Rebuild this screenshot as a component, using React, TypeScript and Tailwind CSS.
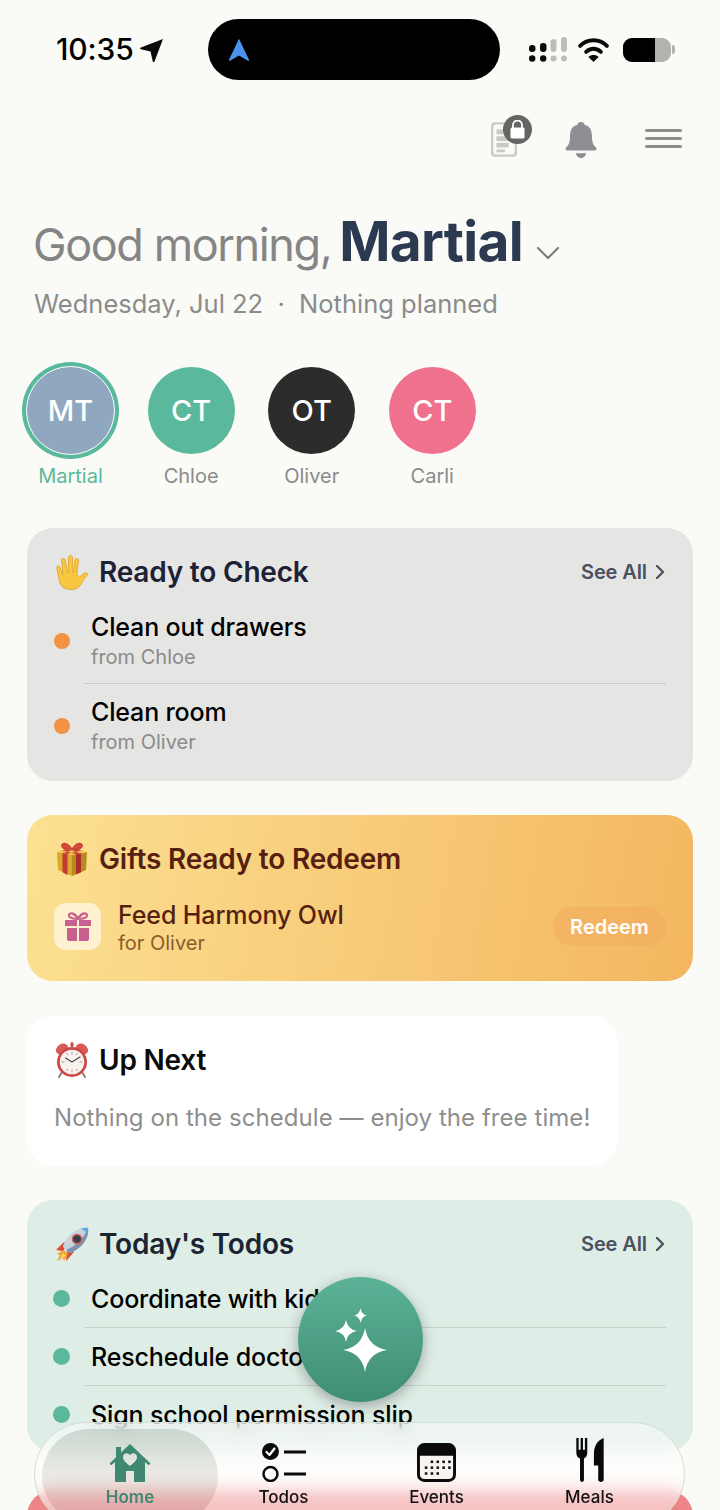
import { ChevronDown, ChevronRight } from 'lucide-react';
import type { ReactNode } from 'react';

const FONT = "font-['Inter','Liberation_Sans',sans-serif]";

// four point star with concave sides
function star(cx: number, cy: number, rx: number, ry: number) {
  const kx = rx * 0.14;
  const ky = ry * 0.14;
  return `M${cx} ${cy - ry}Q${cx + kx} ${cy - ky} ${cx + rx} ${cy}Q${cx + kx} ${cy + ky} ${cx} ${cy + ry}Q${cx - kx} ${cy + ky} ${cx - rx} ${cy}Q${cx - kx} ${cy - ky} ${cx} ${cy - ry}z`;
}

function HandEmoji() {
  return (
    <svg width="36" height="36" viewBox="0 0 36 36">
      <path
        d="M10 34c-3-2-4.500-5-5-9L2.800 14c-.4-2.200 2.800-2.800 3.400-.6l2.300 7.600.7-.2L7.500 6.500c-.3-2.400 3.200-2.900 3.700-.5l2.300 12.500.8-.1.300-15c0-2.600 3.700-2.600 3.800 0l.5 15 .8.100L21 6c.5-2.400 3.900-1.800 3.500.7l-1.800 14.500c1.500.2 2.500 1 3 2 1.500-2 3-3.500 5-4.200 2.300-.8 3.700 1 2.500 2.600-2.500 2-4 4.500-5.200 7-1.300 2.500-2.500 4-4.300 5.200-3.700 2.300-9.500 2.300-13.700 0z"
        fill="#f8c63f"
        stroke="#dd9e26"
        strokeWidth="0.8"
      />
    </svg>
  );
}

function GiftEmoji() {
  return (
    <svg width="36" height="36" viewBox="0 0 36 36">
      <path d="M3 11l15 3v21L4 29z" fill="#d9a92c" />
      <path d="M33 11l-15 3v21l14-6z" fill="#b88a1f" />
      <path d="M3 11l15-4 15 4-15 3z" fill="#eec54a" />
      <path d="M8.500 12.100l5 1v21l-5-2.900z" fill="#c23a30" />
      <path d="M22 13.200l5-1v19l-5 2.200z" fill="#a92f28" />
      <path d="M8.500 12.100L24 8.200l4 1-14.500 3.900zM27 12.200L12 8.200l-4 1L22 13.200z" fill="#d2473a" />
      <path
        d="M18 8C14 1 8 1 7.500 4.500 7 8 14 9.500 18 8zm0 0c4-7 10-7 10.500-3.500C29 8 22 9.500 18 8z"
        fill="#d8463c"
        stroke="#a92c28"
        strokeWidth="0.8"
      />
    </svg>
  );
}

function ClockEmoji() {
  return (
    <svg width="36" height="36" viewBox="0 0 36 36">
      <path d="M8 30l-3 5M28 30l3 5" stroke="#8a8078" strokeWidth="2" strokeLinecap="round" />
      <ellipse cx="8" cy="7" rx="6.500" ry="5" transform="rotate(-35 8 7)" fill="#dc5a5a" />
      <ellipse cx="28" cy="7" rx="6.500" ry="5" transform="rotate(35 28 7)" fill="#dc5a5a" />
      <rect x="16.500" y="0" width="3" height="5" rx="1.500" fill="#c64a4a" />
      <circle cx="18" cy="20" r="15" fill="#c94747" />
      <circle cx="18" cy="20" r="12.300" fill="#f7f2ee" />
      <path
        d="M18 9.500v3M18 27.500v3M7.500 20h3M25.500 20h3M12.700 11l1.300 2.200M23.300 11L22 13.200M12.700 29l1.300-2.200M23.300 29L22 26.800"
        stroke="#b9938c"
        strokeWidth="1"
      />
      <path d="M18 20l-6.500-4M18 20l8-5" stroke="#4a4a4a" strokeWidth="1.200" strokeLinecap="round" />
    </svg>
  );
}

function RocketEmoji() {
  return (
    <svg width="36" height="36" viewBox="0 0 36 36">
      <path d="M2 24l8-8 4 2-5 7zM12 35l8-9-1-5-6 5z" fill="#e0492f" />
      <path d="M10 24l-7 4 3 1-3 6 6-3 1 3 4-7z" fill="#f3a433" />
      <path d="M9 27l-3 6 6-3z" fill="#f9dc5c" />
      <path d="M34 2c-8-1-16 3-22 12-2 3-3 5-3 7l6 6c2 0 4-1 7-3C31 18 35 10 34 2z" fill="#c9d3df" />
      <path d="M34 2c1 8-3 16-12 22-3 2-5 3-7 3l-3-3C22 20 30 12 34 2z" fill="#7e92ad" />
      <circle cx="23" cy="13" r="4.500" fill="#3a3f4a" stroke="#d35a4a" strokeWidth="1.500" />
      <path d="M34 2c-2-.3-5-.2-7 .5 3 1.300 5 3.500 6.500 6.500.7-2 .8-5 .5-7z" fill="#5aa9e6" />
    </svg>
  );
}

function SparkleGroup() {
  return (
    <svg width="52" height="64" viewBox="0 0 52 64" fill="white">
      <path d={star(30, 42, 22, 22)} />
      <path d={star(11, 23, 11, 11)} />
      <path d={star(25.5, 7.5, 6.5, 7.5)} />
    </svg>
  );
}

function SeeAll() {
  return (
    <div className="flex items-center pl-[2px] text-[20px] font-semibold tracking-[-0.1px] text-[#4a5160]">
      <span>See All</span>
      <ChevronRight size={24} strokeWidth={2.3} className="mr-[-6px] ml-[1px]" />
    </div>
  );
}

function CardTitle({ icon, children, color }: { icon: ReactNode; children: ReactNode; color: string }) {
  return (
    <div className={`flex items-center gap-[9px] text-[28px] font-semibold leading-[36px] tracking-[-0.2px] ${color}`}>
      {icon}
      <span>{children}</span>
    </div>
  );
}

function CheckRow({ title, from, last }: { title: string; from: string; last?: boolean }) {
  return (
    <div className={`relative ml-[30px] h-[85px] pl-[7px] pt-[11px] ${last ? '' : 'border-b border-[#c9c9c9]'}`}>
      <span className="absolute left-[-30px] top-[34px] h-[16px] w-[16px] rounded-full bg-[#f39242]" />
      <div className="text-[25px] font-[550] leading-[34px] tracking-[-0.15px] text-black">{title}</div>
      <div className="mt-[1px] text-[20px] leading-[24px] text-[#8b8b8b]">{from}</div>
    </div>
  );
}

function TodoRow({ title }: { title: string }) {
  return (
    <div className="relative ml-[30px] h-[58px] border-b border-[#c4d3ca] pl-[7px] pt-[12px]">
      <span className="absolute left-[-31px] top-[20px] h-[17px] w-[17px] rounded-full bg-[#5cb89d]" />
      <div className="truncate text-[25px] font-[550] leading-[34px] tracking-[-0.15px] text-black">{title}</div>
    </div>
  );
}

const people = [
  { initials: 'MT', name: 'Martial', bg: 'bg-[#8fa8c0]', active: true },
  { initials: 'CT', name: 'Chloe', bg: 'bg-[#5ab99d]' },
  { initials: 'OT', name: 'Oliver', bg: 'bg-[#2c2c2c]' },
  { initials: 'CT', name: 'Carli', bg: 'bg-[#f0718e]' },
];

function TabBar() {
  return (
    <nav className="absolute left-[34px] top-[1422px] flex h-[104px] w-[651px] rounded-[52px] border border-[#d3dcd6] bg-white/50 pl-[19px] pt-[6px] backdrop-blur-[8px]">
      <div className="relative flex h-[79px] w-[153px] flex-col items-center justify-end">
        <span className="absolute left-[-12px] top-0 h-[94px] w-[176px] rounded-[47px] bg-gradient-to-b from-[#8aa396]/35 via-[#a09a90]/20 to-[#b05a5a]/30" />
        <svg className="relative mb-[4px] mr-[2px]" width="42" height="38" viewBox="0 0 42 38" fill="#3f8872">
          <path
            fillRule="evenodd"
            d="M21 0l20.500 19.500-1.800 1.800L36 18v20H25V27h-8v11H6V18l-3.700 3.300L.5 19.500 7 13.200V3h5v5.500zM21 22c-1-1.200-7-4.500-7-9 0-4.500 5.500-5 7-1.800 1.500-3.200 7-2.700 7 1.800 0 4.500-6 7.800-7 9z"
          />
        </svg>
        <span className="relative mr-[1px] text-[17px] font-semibold leading-[22px] text-[#3f8872]">Home</span>
      </div>
      <div className="flex h-[79px] w-[153px] flex-col items-center justify-end">
        <svg className="mb-[4px]" width="44" height="39" viewBox="0 0 44 39">
          <circle cx="8.500" cy="8.500" r="8.500" fill="#0a0a0a" />
          <path d="M4.500 9l3 3 5-6.500" stroke="white" strokeWidth="2.200" fill="none" strokeLinecap="round" strokeLinejoin="round" />
          <circle cx="8.500" cy="31" r="7" fill="none" stroke="#0a0a0a" strokeWidth="2.400" />
          <path d="M22 9h22M22 31h22" stroke="#0a0a0a" strokeWidth="2.800" />
        </svg>
        <span className="text-[17px] font-medium leading-[22px] text-[#111]">Todos</span>
      </div>
      <div className="flex h-[79px] w-[153px] flex-col items-center justify-end">
        <svg className="mb-[4px]" width="39" height="39" viewBox="0 0 40 40">
          <rect x="1.500" y="1.500" width="37" height="37" rx="6" fill="#f7f4f1" stroke="#0a0a0a" strokeWidth="3" />
          <path d="M1.500 8a6 6 0 0 1 6-6h25a6 6 0 0 1 6 6v5h-37z" fill="#0a0a0a" />
          <g fill="#111">
            {[18, 24, 30].map((y) =>
              [8, 14, 20, 26, 32].map((x) =>
                (y === 18 && x < 14) || (y === 30 && x > 20) ? null : <rect key={`${x}-${y}`} x={x} y={y} width="2.600" height="2.600" />,
              ),
            )}
          </g>
        </svg>
        <span className="text-[17px] font-medium leading-[22px] text-[#111]">Events</span>
      </div>
      <div className="flex h-[79px] w-[153px] flex-col items-center justify-end">
        <svg className="mb-[4px]" width="28" height="44" viewBox="0 0 28 45" fill="#0a0a0a">
          <path d="M0 0h2.400v12h2V0h2.400v12h2V0h2.400v15c0 3-1.500 5-3.400 6v22c0 2.500-4 2.500-4 0V21C1.500 20 0 18 0 15z" />
          <path d="M28 0v43c0 2.500-5.600 2.500-5.600 0V28H18V16C18 8 22 2 28 0z" />
        </svg>
        <span className="text-[17px] font-medium leading-[22px] text-[#111]">Meals</span>
      </div>
    </nav>
  );
}

export default function App() {
  return (
    <div className={`relative h-[1510px] w-[720px] overflow-hidden bg-[#fafaf6] ${FONT}`}>
      {/* status bar */}
      <div className="flex h-[80px] items-start pt-[19px]">
        <div className="flex h-[61px] w-[208px] items-center pl-[56px]">
          <span className="text-[30px] font-medium tracking-[-0.1px] text-black">10:35</span>
          <svg className="ml-[6px]" width="24" height="24" viewBox="0 0 24 24" fill="#0a0a0a">
            <path d="M23 1L14.500 23.500c-.5 1-1.500 1-1.700 0L10.500 13.500.9 11.200c-1-.3-1-1.300 0-1.700z" />
          </svg>
        </div>
        <div className="flex h-[61px] w-[292px] items-center rounded-[31px] bg-black pl-[20px]">
          <svg width="22" height="24" viewBox="0 0 22 33" preserveAspectRatio="none" fill="#4a94f0">
            <path d="M11 1L21 30c.3 1.200-.6 1.800-1.500 1L11 24l-8.500 7c-.9.8-1.800.2-1.500-1z" />
          </svg>
        </div>
        <div className="flex h-[61px] items-center pl-[29px]">
          <svg width="38" height="26" viewBox="0 0 38 26">
            <g fill="#0a0a0a">
              <rect x="0" y="8" width="6.500" height="7" rx="3.200" />
              <circle cx="3.200" cy="21.500" r="3.200" />
              <rect x="11" y="6" width="6.500" height="9" rx="3.200" />
              <circle cx="14.200" cy="21.500" r="3.200" />
            </g>
            <g fill="#bdbdb8">
              <rect x="21.500" y="2" width="6" height="13" rx="3" />
              <circle cx="24.500" cy="21.500" r="3" />
              <rect x="32" y="0" width="6" height="15" rx="3" />
              <circle cx="35" cy="21.500" r="3" />
            </g>
          </svg>
          <svg className="ml-[11px]" width="31" height="24" viewBox="0 0 33 26" fill="none" stroke="#0a0a0a" strokeWidth="4.200" strokeLinecap="round">
            <path d="M2 8.500c8-8 21-8 29 0" />
            <path d="M8.500 15c4.500-4.500 11.500-4.500 16 0" />
            <path d="M16.500 26l-5.500-5.500c3-2.700 8-2.700 11 0z" fill="#0a0a0a" stroke="none" />
          </svg>
          <div className="ml-[14px] flex h-[24px] w-[48px] overflow-hidden rounded-[9px] bg-[#b4b2ac]">
            <div className="h-full w-[32px] bg-black" />
          </div>
          <span className="ml-[1px] h-[9px] w-[3px] rounded-r-full bg-[#b4b2ac]" />
        </div>
      </div>

      {/* top actions */}
      <div className="mt-[35px] flex h-[44px] items-start justify-end pr-[38px]">
        <div className="relative h-[44px] w-[46px]">
          <svg className="absolute left-0 top-[7px]" width="28" height="35" viewBox="0 0 28 37">
            <rect x="1.500" y="1.500" width="25" height="34" rx="3" fill="none" stroke="#c9c9c7" strokeWidth="2.500" />
            <path d="M6 8h13v5H6zM6 15h16v5H6zM6 22h13v5H6zM6 29h9v3H6z" fill="#c9c9c7" />
          </svg>
          <span className="absolute left-[13px] top-0 flex h-[29px] w-[29px] items-center justify-center rounded-full bg-[#656563]">
            <svg width="15" height="19" viewBox="0 0 15 19" fill="white">
              <path d="M3 8V5a4.500 4.500 0 0 1 9 0v3" fill="none" stroke="white" strokeWidth="1.800" />
              <rect x="0.500" y="7.500" width="14" height="11" rx="1.500" />
            </svg>
          </span>
        </div>
        <svg className="ml-[29px] mt-[7px]" width="32" height="36" viewBox="0 0 32 38" preserveAspectRatio="none" fill="#8e8e93">
          <path d="M16 0c2 0 3.300 1.300 3.500 3 5.500 1.500 7.500 6 7.500 12 0 7 1.500 9.500 4 12 1 1 .5 3-1 3H2c-1.500 0-2-2-1-3 2.500-2.500 4-5 4-12 0-6 2-10.500 7.500-12 .2-1.700 1.500-3 3.500-3z" />
          <path d="M11 33h10c0 2.500-2 5-5 5s-5-2.500-5-5z" />
        </svg>
        <div className="ml-[48px] mt-[14px] flex w-[37px] flex-col gap-[5px]">
          <span className="h-[3px] rounded-full bg-[#8e8e8e]" />
          <span className="h-[3px] rounded-full bg-[#8e8e8e]" />
          <span className="h-[3px] rounded-full bg-[#8e8e8e]" />
        </div>
      </div>

      {/* greeting */}
      <div className="mt-[48px] flex items-baseline pl-[33px]">
        <span className="text-[45px] leading-[68px] tracking-[-1.4px] text-[#858585]">Good morning,</span>
        <span className="ml-[8px] text-[55px] font-bold leading-[68px] tracking-[-0.7px] text-[#2b3a50]">Martial</span>
        <ChevronDown size={40} strokeWidth={1.3} className="ml-[5px] translate-y-[12px] text-[#7d7d7d]" />
      </div>
      <div className="mt-[7px] pl-[34px] text-[25.5px] leading-[36px] text-[#8b8b8b]">Wednesday, Jul 22 &nbsp;·&nbsp; Nothing planned</div>

      {/* family members */}
      <div className="mt-[40px] flex gap-[23.6px] pl-[22px]">
        {people.map((p) => (
          <div key={p.name} className="flex w-[97px] flex-col items-center">
            <div className={`flex h-[97px] w-[97px] items-center justify-center rounded-full ${p.active ? 'bg-[#5ab99d]' : ''}`}>
              <div
                className={`flex items-center justify-center rounded-full text-[29px] font-medium text-white ${p.bg} ${
                  p.active ? 'h-[89px] w-[89px] border-[1.5px] border-white' : 'h-[87px] w-[87px]'
                }`}
              >
                {p.initials}
              </div>
            </div>
            <span className={`mt-[4px] text-[20px] leading-[26px] ${p.active ? 'text-[#5ab99d]' : 'text-[#8b8b8b]'}`}>{p.name}</span>
          </div>
        ))}
      </div>

      <div className="mx-[27px] mt-[39px] flex flex-col gap-[34px]">
        {/* ready to check */}
        <section className="h-[253px] rounded-[26px] bg-[#e5e5e4] px-[27px] pt-[26px]">
          <div className="flex items-center justify-between">
            <CardTitle icon={<HandEmoji />} color="text-[#1d2136]">
              Ready to Check
            </CardTitle>
            <SeeAll />
          </div>
          <div className="mt-[9px]">
            <CheckRow title="Clean out drawers" from="from Chloe" />
            <CheckRow title="Clean room" from="from Oliver" last />
          </div>
        </section>

        {/* gifts */}
        <section className="mb-[1px] h-[166px] rounded-[26px] bg-[linear-gradient(100deg,#fbe192,#f4b660)] px-[27px] pt-[26px]">
          <CardTitle icon={<GiftEmoji />} color="text-[#571f10]">
            Gifts Ready to Redeem
          </CardTitle>
          <div className="mt-[20px] flex items-center">
            <span className="flex h-[47px] w-[47px] items-center justify-center rounded-[12px] bg-[#fdf1cf]">
              <svg width="28" height="30" viewBox="0 0 28 30" fill="#c85f8f">
                <path d="M14 7C11 1 6 0 5 3c-.7 2.500 4 4 9 4zm0 0c3-6 8-7 9-4 .7 2.500-4 4-9 4z" fill="none" stroke="#c85f8f" strokeWidth="2.200" />
                <path d="M1 8h12v6H1zM15 8h12v6H15zM3 16h10v13H5a2 2 0 0 1-2-2zM15 16h10v11a2 2 0 0 1-2 2h-8z" />
              </svg>
            </span>
            <div className="ml-[17px] flex-1 pt-[3px]">
              <div className="text-[25px] font-[550] leading-[30px] tracking-[-0.1px] text-[#571f10]">Feed Harmony Owl</div>
              <div className="text-[20px] leading-[26px] text-[#8d5a2e]">for Oliver</div>
            </div>
            <span className="flex h-[39px] w-[113px] items-center justify-center rounded-full bg-[#f0a85c]/40 text-[20px] font-semibold text-white">Redeem</span>
          </div>
        </section>

        {/* up next */}
        <section className="h-[150px] w-[590px] rounded-[26px] bg-white px-[27px] pt-[26px]">
          <CardTitle icon={<ClockEmoji />} color="text-[#0a0a0a]">
            Up Next
          </CardTitle>
          <p className="mt-[23px] whitespace-nowrap text-[24px] leading-[34px] tracking-[0.06px] text-[#8e8e8e]">Nothing on the schedule — enjoy the free time!</p>
        </section>

        {/* today's todos */}
        <section className="h-[252px] overflow-hidden rounded-[26px] bg-[#deede5] px-[27px] pt-[26px]">
          <div className="flex items-center justify-between">
            <CardTitle icon={<RocketEmoji />} color="text-[#1a2433]">
              Today's Todos
            </CardTitle>
            <SeeAll />
          </div>
          <div className="mt-[8px]">
            <TodoRow title="Coordinate with kids" />
            <TodoRow title="Reschedule doctor" />
            <TodoRow title="Sign school permission slip" />
          </div>
        </section>

        {/* next card, mostly under the tab bar */}
        <section className="mt-[4px] h-[120px] rounded-[26px] bg-[#ec8686]" />
      </div>

      <button className="absolute left-[298px] top-[1277px] flex h-[125px] w-[125px] items-center justify-center rounded-full bg-gradient-to-b from-[#5bb297] to-[#3f8d75] shadow-[0_4px_14px_rgba(0,0,0,0.3)]">
        <SparkleGroup />
      </button>

      <TabBar />
    </div>
  );
}
